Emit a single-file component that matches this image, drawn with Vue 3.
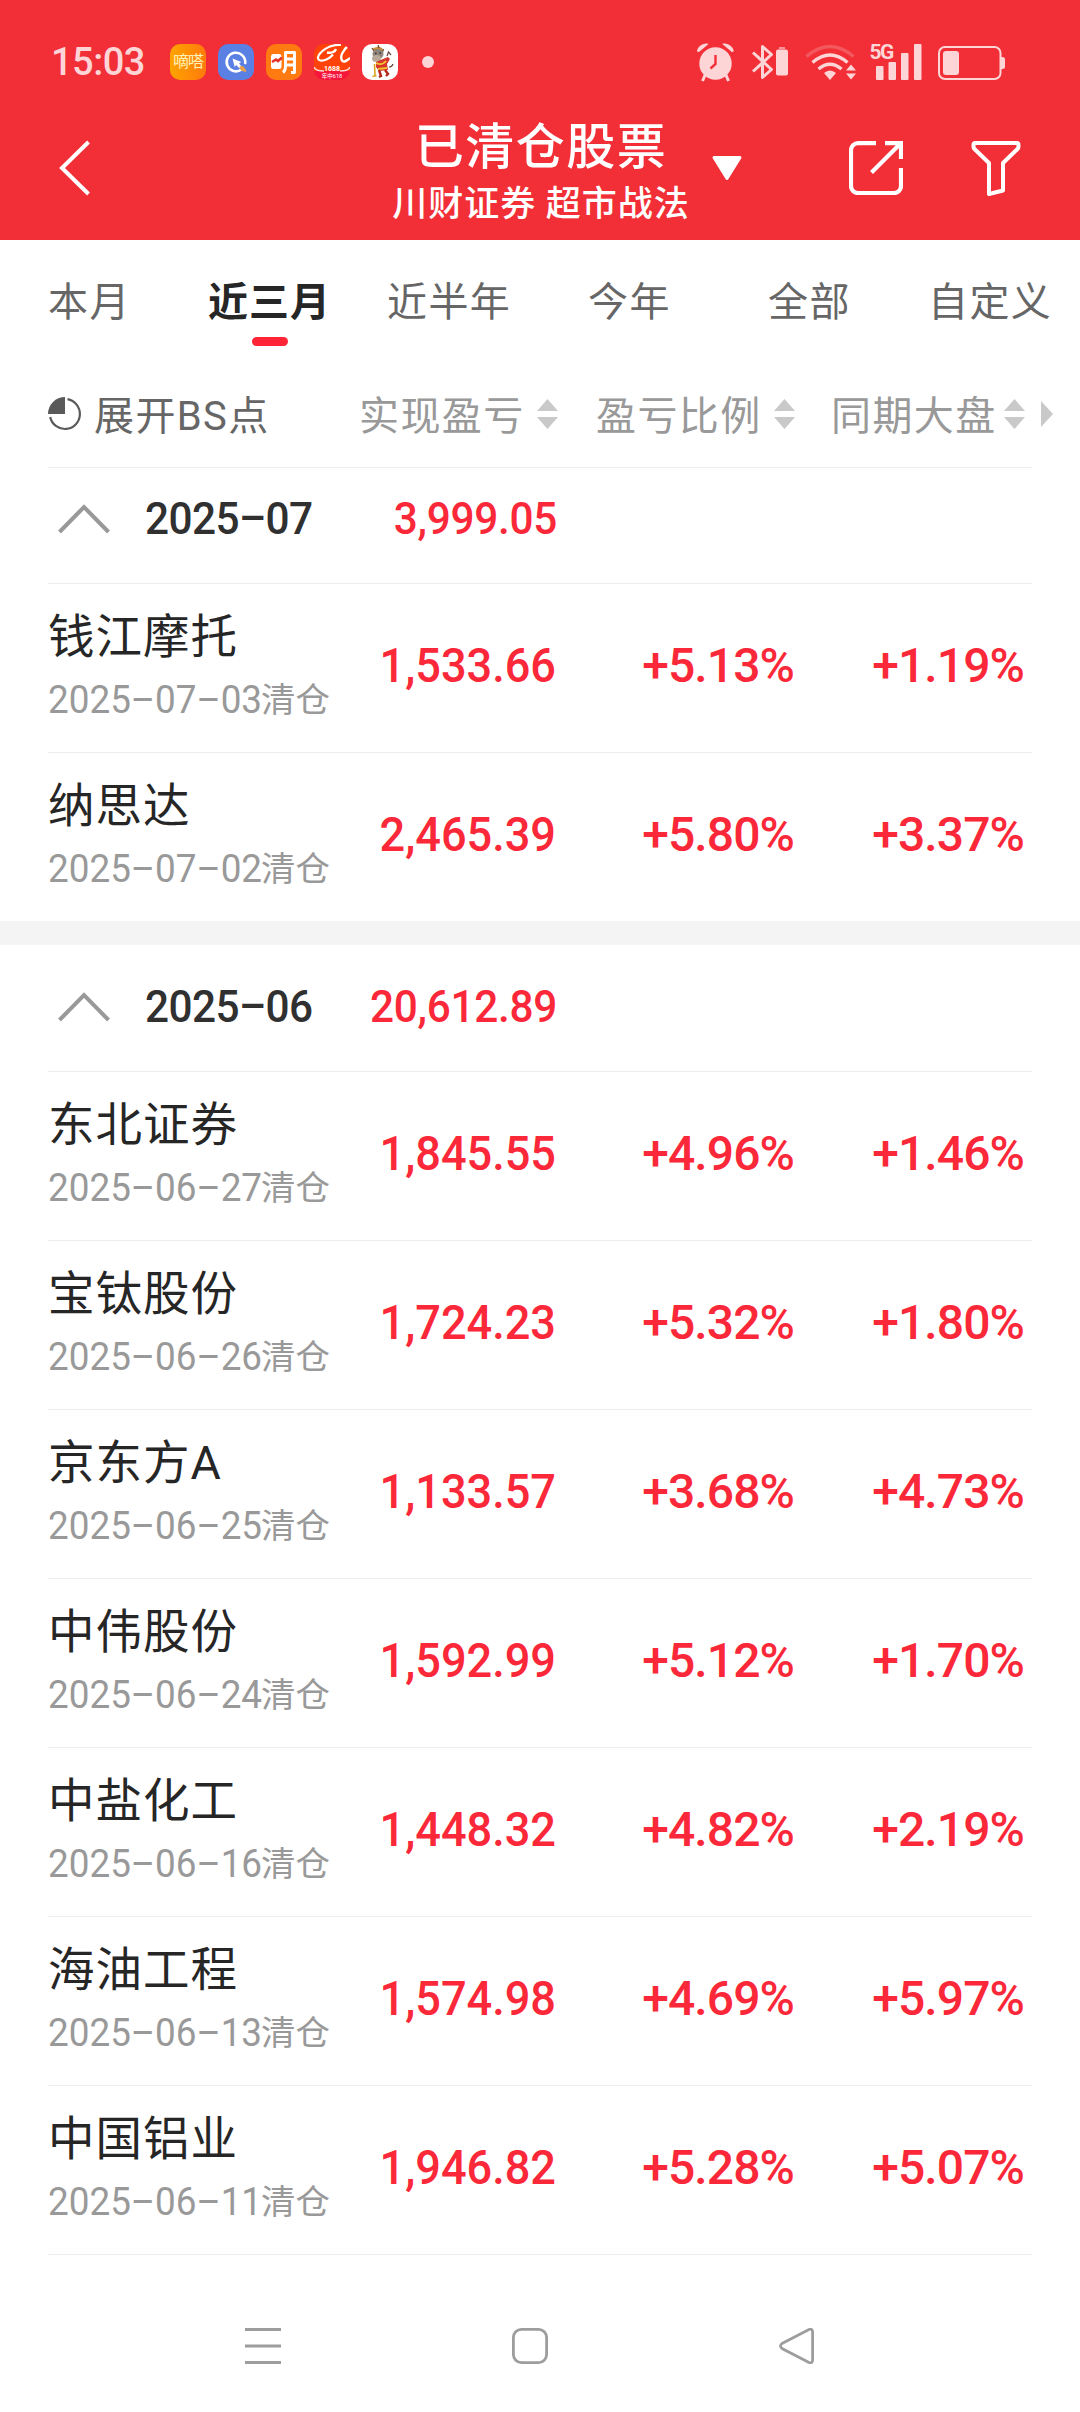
<script setup>
const tabs = [
  { label: '本月', left: 48 },
  { label: '近三月', left: 208, active: true },
  { label: '近半年', left: 387 },
  { label: '今年', left: 588 },
  { label: '全部', left: 768 },
  { label: '自定义', left: 928 },
]

const columns = ['实现盈亏', '盈亏比例', '同期大盘']

const groups = [
  {
    month: '2025–07',
    total: '3,999.05',
    rows: [
      { name: '钱江摩托', date: '2025–07–03', profit: '1,533.66', ratio: '+5.13%', market: '+1.19%' },
      { name: '纳思达', date: '2025–07–02', profit: '2,465.39', ratio: '+5.80%', market: '+3.37%' },
    ],
  },
  {
    month: '2025–06',
    total: '20,612.89',
    rows: [
      { name: '东北证券', date: '2025–06–27', profit: '1,845.55', ratio: '+4.96%', market: '+1.46%' },
      { name: '宝钛股份', date: '2025–06–26', profit: '1,724.23', ratio: '+5.32%', market: '+1.80%' },
      { name: '京东方A', date: '2025–06–25', profit: '1,133.57', ratio: '+3.68%', market: '+4.73%' },
      { name: '中伟股份', date: '2025–06–24', profit: '1,592.99', ratio: '+5.12%', market: '+1.70%' },
      { name: '中盐化工', date: '2025–06–16', profit: '1,448.32', ratio: '+4.82%', market: '+2.19%' },
      { name: '海油工程', date: '2025–06–13', profit: '1,574.98', ratio: '+4.69%', market: '+5.97%' },
      { name: '中国铝业', date: '2025–06–11', profit: '1,946.82', ratio: '+5.28%', market: '+5.07%' },
    ],
  },
]
</script>

<template>
  <div class="screen">
    <header class="top">
      <div class="status">
        <span class="clock">15:03</span>
        <div class="apps">
          <span class="app dida">嘀嗒</span>
          <span class="app quark">
            <svg width="36" height="36" viewBox="0 0 36 36">
              <path d="M23.5 25.500A9.300 9.300 0 1 1 27.200 19" fill="none" stroke="#fff" stroke-width="2.600" stroke-linecap="round" />
              <path d="M14.500 14.500l8.800 3.400-2.200 1.600 2.600 3.200-2 1.800-3.600-3.600-1.400 2.200z" fill="#fff" />
              <path d="M21.500 22.500c3-1.500 5.500 0 7 5.500-4.500-.5-7-2-7-5.500z" fill="#e8a14a" />
            </svg>
          </span>
          <span class="app ming">
            <svg width="36" height="36" viewBox="0 0 36 36">
              <rect x="5" y="10" width="10.500" height="15" rx="2.500" fill="#fff" />
              <path d="M6 18l4-2.500 2 1.500 4-3.500" fill="none" stroke="#e5342a" stroke-width="2.600" />
              <path d="M17 28.500q2.500-2 2.500-6V8.500h9v20h-3.500M19.500 15h9M19.500 21h9" fill="none" stroke="#fff" stroke-width="2.900" stroke-linejoin="round" />
            </svg>
          </span>
          <span class="app ali">
            <svg width="36" height="36" viewBox="0 0 36 36">
              <path d="M0 27h36v9H0z" fill="#f5163c" />
              <path d="M27 1C15 0 5 8 4 13.500c-.5 5 9 4 15-3" fill="none" stroke="#fff" stroke-width="2.200" />
              <path d="M13 8.500c4 1 8-.5 9-3.500M35 1c-6 5-10 12-6.500 16 2 1.500 4 0 7.500-3" fill="none" stroke="#fff" stroke-width="2.400" />
              <path d="M0 23c1 3 5 4 10 4M36 23c-1 3-5 4-10 4" fill="none" stroke="#ffd9d3" stroke-width="1.400" />
              <text x="18" y="26.500" class="ali-num">1688</text>
              <text x="18" y="34" class="ali-sub">年中618</text>
            </svg>
          </span>
          <span class="app ox">
            <svg width="36" height="36" viewBox="0 0 36 36">
              <path d="M11.500 7c-2-2 0-3.500 4-4 4-.5 6 2 5 4z" fill="#c98b35" />
              <path d="M16 1l1 3M10 4l2 3M21.500 5l-1 3" stroke="#6b4a2b" stroke-width="1.300" />
              <ellipse cx="16" cy="10" rx="5.500" ry="5" fill="#8f857b" />
              <ellipse cx="14.500" cy="14.500" rx="4.500" ry="3.500" fill="#b9a999" />
              <path d="M13 9.500h1.500M17.500 9h1.500" stroke="#333" stroke-width="1.500" />
              <path d="M14 18l7-3 5-2 2 2-3 5 1 6-9 1-3-4z" fill="#d8352a" />
              <path d="M14 19q6 3 10-2M16 25l9-1" fill="none" stroke="#f2c431" stroke-width="1.800" />
              <path d="M17 26l2 6-2 1M23 26l3 4-2 2" fill="none" stroke="#b3261e" stroke-width="2.400" />
              <path d="M12.500 20l.5 12M10.500 32.500l4-1" stroke="#d9a420" stroke-width="1.600" />
              <path d="M25 12l1.500-4 2.500 3M27 23q3 0 4-3" fill="none" stroke="#6a4540" stroke-width="1.200" />
            </svg>
          </span>
        </div>
        <i class="more-dot"></i>
        <svg class="signals" width="310" height="60" viewBox="696 32 310 60">
          <g fill="#fdd5d7">
            <circle cx="715.500" cy="63.500" r="16.200" />
            <path d="M697 51.500c0-5 7-9.500 11.500-7.500l-9.500 8zM733.800 51.500c0-5-7-9.500-11.500-7.500l9.500 8z" />
            <path d="M705.500 74l-3 7M725.500 74l3 7" stroke="#fdd5d7" stroke-width="3" />
            <path d="M715.500 55v9l-5 4.500" fill="none" stroke="#f22f37" stroke-width="2.400" />
            <path d="M753 52.500l18.500 17-9 8V46.500l9 8-18.500 17" fill="none" stroke="#fdd5d7" stroke-width="3" stroke-linejoin="round" />
            <rect x="776" y="49.500" width="12" height="26" rx="2" />
            <rect x="779" y="47" width="6" height="2" opacity=".6" />
          </g>
          <g fill="none" stroke="#fdd5d7" stroke-width="3.400">
            <path d="M806.500 56.500q23.500-20 47 0" opacity=".25" />
            <path d="M812.500 62.500q17.500-15 35 0" />
            <path d="M818.500 69q11.500-9.500 23 0" />
          </g>
          <g fill="#fdd5d7">
            <path d="M824 73q6-5 12 0l-6 7z" />
            <path d="M846 70.500l5-6 5 6zM846 73.500l5 6 5-6z" />
            <text x="869.500" y="58.700" class="net">5G</text>
            <rect x="876" y="66" width="7.500" height="14" rx="1" />
            <rect x="888.500" y="62" width="7.500" height="18" rx="1" />
            <rect x="901" y="53" width="7.500" height="27" rx="1" />
            <rect x="914" y="44" width="7.500" height="36" rx="1" />
            <rect x="943" y="51" width="16" height="24" rx="3" />
            <path d="M1001 57h1.500a2.500 2.500 0 0 1 2.500 2.500v7a2.500 2.500 0 0 1-2.500 2.500H1001z" />
          </g>
          <rect x="939" y="47" width="61.500" height="32" rx="6" fill="none" stroke="#fdd5d7" stroke-width="2" />
        </svg>
      </div>
      <div class="bar">
        <svg class="back" width="34" height="56" viewBox="0 0 34 56">
          <path d="M29.500 2L3 28l26.500 26" fill="none" stroke="#fff" stroke-width="4" />
        </svg>
        <div class="titles">
          <h1>已清仓股票</h1>
          <p>川财证券 超市战法</p>
        </div>
        <svg class="caret" width="32" height="26" viewBox="0 0 32 26">
          <path d="M3 2.500h26L16 23.500z" fill="#fff" stroke="#fff" stroke-width="3" stroke-linejoin="round" />
        </svg>
        <svg class="share" width="54" height="54" viewBox="0 0 54 54" fill="none" stroke="#fff" stroke-width="4.200">
          <path d="M27 2.100H9a7 7 0 0 0-7 7V45a7 7 0 0 0 7 7h36a7 7 0 0 0 7-7V27" />
          <path d="M36 2.100h16V18M51 3L22.500 31.500" />
        </svg>
        <svg class="filter" width="50" height="56" viewBox="0 0 50 56" fill="none" stroke="#fff" stroke-width="4" stroke-linejoin="round">
          <path d="M4 3h42q1.500 0 1.500 2v1.500q0 1.500-1 2.500L32 23v27.500L18 54V23L3.500 9q-1-1-1-2.500V5q0-2 1.500-2z" />
        </svg>
      </div>
    </header>

    <nav class="tabs">
      <span v-for="t in tabs" :key="t.label" class="tab" :class="{ active: t.active }" :style="{ left: t.left + 'px' }">{{ t.label }}</span>
    </nav>

    <div class="heads">
      <svg class="pie" width="34" height="34" viewBox="0 0 34 34">
        <path d="M17 17H0A17 17 0 0 1 17 0z" fill="#5a5a5a" />
        <path d="M19.500 2.200A15 15 0 1 1 2.200 20" fill="none" stroke="#5a5a5a" stroke-width="2.200" />
      </svg>
      <span class="expand">展开BS点</span>
      <span v-for="c in columns" :key="c" class="head">
        <span class="caption">{{ c }}</span>
        <svg width="21" height="30" viewBox="0 0 21 30" fill="#c9c9c9"><path d="M10.500 0L21 12H0zM0 18h21L10.500 30z" /></svg>
      </span>
      <svg class="next" width="12" height="26" viewBox="0 0 12 26" fill="#c9c9c9"><path d="M0 0l12 13L0 26z" /></svg>
    </div>

    <section v-for="g in groups" :key="g.month" class="group">
      <div class="month">
        <svg width="52" height="30" viewBox="0 0 52 30">
          <path d="M1.500 28L26 3l24.500 25" fill="none" stroke="#999" stroke-width="4" />
        </svg>
        <span class="label">{{ g.month }}</span>
        <span class="total">{{ g.total }}</span>
      </div>
      <div v-for="r in g.rows" :key="r.name" class="row">
        <div class="stock">
          <div class="name">{{ r.name }}</div>
          <div class="date"><span class="day">{{ r.date }}</span>清仓</div>
        </div>
        <span class="num profit">{{ r.profit }}</span>
        <span class="num">{{ r.ratio }}</span>
        <span class="num">{{ r.market }}</span>
      </div>
    </section>

    <footer class="keys">
      <svg width="36" height="36" viewBox="0 0 36 36" stroke="#9d9d9d" stroke-width="3"><path d="M0 1.500h36M0 18h36M0 34.500h36" /></svg>
      <svg width="36" height="36" viewBox="0 0 36 36" fill="none" stroke="#9d9d9d" stroke-width="2.800"><rect x="1.400" y="1.400" width="33.200" height="33.200" rx="8" /></svg>
      <svg width="36" height="36" viewBox="0 0 36 36" fill="none" stroke="#9d9d9d" stroke-width="2.800"><path d="M3 15.500L29.500 1.700Q33.600 0 33.600 4v28q0 4-4.100 2.300L3 20.500q-3-2.500 0-5z" /></svg>
    </footer>
  </div>
</template>

<style>
body {
  margin: 0;
  background: #fff;
}
</style>

<style scoped>
.screen {
  width: 1080px;
  height: 2412px;
  overflow: hidden;
  background: #fff;
  display: flex;
  flex-direction: column;
  font-family: Roboto, "Noto Sans CJK SC", sans-serif;
  white-space: nowrap;
}
svg {
  display: block;
  flex: none;
}
.top {
  height: 240px;
  background: #f22f37;
  color: #fff;
}
.status {
  height: 124px;
  box-sizing: border-box;
  padding: 0 74px 0 51px;
  display: flex;
  align-items: center;
}
.clock {
  width: 119px;
  font-size: 38px;
  line-height: 40px;
  font-weight: 500;
  letter-spacing: -0.5px;
  color: #fdd5d7;
}
.apps {
  display: flex;
  gap: 12px;
}
.app {
  width: 36px;
  height: 36px;
  border-radius: 10px;
  overflow: hidden;
}
.dida {
  background: linear-gradient(90deg, #ffa400, #ff7a0c);
  font-size: 16px;
  line-height: 35px;
  text-align: center;
  letter-spacing: -1px;
  color: #fff3b8;
}
.quark {
  background: #5a80e4;
}
.ming {
  background: #ff7b12;
}
.ali {
  background: #ff4208;
}
.ox {
  background: #fff;
}
.ali-num {
  font-size: 7px;
  font-weight: 700;
  text-anchor: middle;
  fill: #fff;
}
.ali-sub {
  font-size: 5.5px;
  text-anchor: middle;
  fill: #fff;
}
.more-dot {
  width: 12px;
  height: 12px;
  margin-left: 24px;
  border-radius: 50%;
  background: #fdd5d7;
}
.signals {
  margin-left: auto;
}
.net {
  font-size: 21px;
  font-weight: 700;
  letter-spacing: -1.5px;
}
.bar {
  height: 116px;
  display: flex;
  align-items: flex-start;
}
.back {
  margin: 16px 0 0 59px;
}
.titles {
  width: 320px;
  margin-left: 288px;
  text-align: center;
}
h1 {
  margin: -4px 0 0;
  font-size: 49px;
  line-height: 56px;
  font-weight: 500;
  letter-spacing: 1.5px;
}
p {
  margin: 7px 0 0;
  font-size: 35px;
  line-height: 44px;
  letter-spacing: 1px;
  font-weight: 500;
}
.caret {
  margin: 31px 0 0 10px;
}
.share {
  margin: 17px 0 0 106px;
}
.filter {
  margin: 16px 0 0 68px;
}
.tabs {
  position: relative;
  height: 120px;
}
.tab {
  position: absolute;
  top: 35px;
  font-size: 40px;
  line-height: 56px;
  letter-spacing: 1.4px;
  color: #666;
}
.tab.active {
  font-weight: 700;
  letter-spacing: 1px;
  color: #262626;
}
.tab.active::after {
  content: "";
  position: absolute;
  left: 44px;
  top: 62px;
  width: 36px;
  height: 9px;
  border-radius: 5px;
  background: #ff2436;
}
.heads {
  height: 107px;
  margin: 0 27px 0 48px;
  display: flex;
  align-items: center;
  font-size: 40px;
  line-height: 56px;
  letter-spacing: 1.4px;
  color: #666;
}
.expand {
  width: 265px;
  margin-left: 12px;
  padding-top: 6px;
}
.head {
  display: flex;
  align-items: center;
  width: 237px;
  color: #999;
}
.caption {
  width: 178px;
  padding-top: 6px;
}
.head:nth-of-type(3) {
  width: 235px;
}
.head:nth-of-type(4) {
  width: auto;
}
.head:nth-of-type(4) .caption {
  width: 173px;
}
.next {
  margin-left: auto;
}
.group + .group {
  border-top: 24px solid #f4f4f4;
}
.month,
.row {
  margin: 0 48px;
  box-sizing: border-box;
  border-bottom: 1px solid #ececec;
}
.month {
  height: 127px;
  padding: 0 0 3px 10px;
  display: flex;
  align-items: center;
}
.group:first-of-type .month {
  height: 117px;
  border-top: 1px solid #ececec;
  padding: 0 0 14px 10px;
}
.label {
  margin-left: 35px;
  width: 166px;
  font-size: 45px;
  font-weight: 500;
  letter-spacing: -0.6px;
  color: #303030;
  transform: scaleX(0.94);
  transform-origin: left;
}
.total {
  width: 246px;
  text-align: right;
  font-size: 45px;
  font-weight: 500;
  letter-spacing: -0.3px;
  color: #fb2839;
  transform: scaleX(0.94);
  transform-origin: right;
}
.row {
  height: 169px;
  display: grid;
  grid-template-columns: 310px 198px 238px 230px;
  align-items: center;
}
.group:first-of-type .row:last-child {
  height: 168px;
  border-bottom: 0;
}
.name {
  margin-top: -2px;
  font-size: 46.5px;
  line-height: 60px;
  letter-spacing: 1px;
  color: #262626;
}
.date {
  margin-top: 5px;
  display: flex;
  font-size: 34.5px;
  line-height: 56px;
  color: #999;
}
.day {
  width: 213px;
  font-size: 39px;
  transform: scaleX(0.945);
  transform-origin: left;
}
.num {
  text-align: right;
  font-size: 48px;
  line-height: 60px;
  font-weight: 500;
  letter-spacing: -0.9px;
  color: #fb2839;
  padding-bottom: 4px;
}
.profit {
  letter-spacing: 0;
  transform: scaleX(0.94);
  transform-origin: right;
}
.keys {
  margin: 73px 265px 0 245px;
  display: flex;
  justify-content: space-between;
}
</style>
